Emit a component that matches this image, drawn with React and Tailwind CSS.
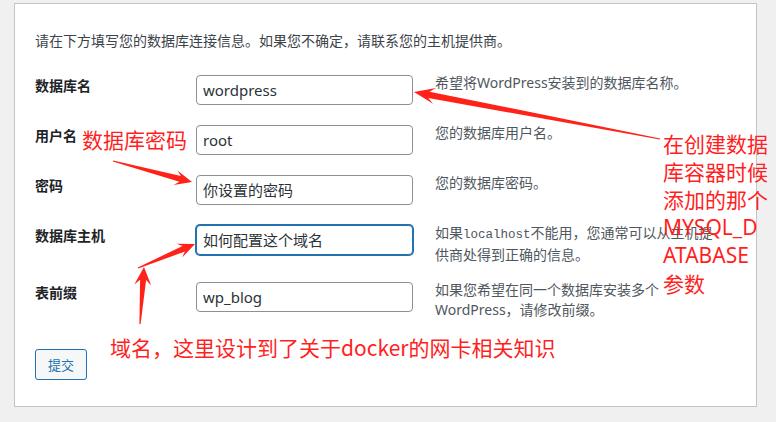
const SANS = "font-['Noto_Sans','Noto_Sans_CJK_SC',sans-serif]";
const CJK = "font-['Noto_Sans_CJK_SC','Noto_Sans',sans-serif]";

// tapered red arrow like a screenshot annotation tool draws
function arrowPoints(x0, y0, x1, y1, head, wing, neck, tail) {
  const len = Math.hypot(x1 - x0, y1 - y0);
  const ux = (x1 - x0) / len;
  const uy = (y1 - y0) / len;
  const nx = -uy;
  const ny = ux;
  const bx = x1 - ux * head;
  const by = y1 - uy * head;
  const kx = x1 - ux * head * 0.72;
  const ky = y1 - uy * head * 0.72;
  const pts = [
    [x0 + nx * tail, y0 + ny * tail],
    [kx + nx * neck, ky + ny * neck],
    [bx + nx * wing, by + ny * wing],
    [x1, y1],
    [bx - nx * wing, by - ny * wing],
    [kx - nx * neck, ky - ny * neck],
    [x0 - nx * tail, y0 - ny * tail],
  ];
  return pts.map((p) => p[0].toFixed(1) + "," + p[1].toFixed(1)).join(" ");
}

const arrows = [
  [660, 139, 414, 92, 21, 8, 3.2, 0.6],
  [113, 161, 192, 182, 17, 7.5, 3, 0.6],
  [138, 268, 195, 244, 17, 7.5, 3, 0.6],
  [140, 324, 144, 267, 18, 8.5, 3, 0.6],
];

const rows = [
  { label: "数据库名", value: "wordpress", desc: ["希望将WordPress安装到的数据库名称。"], h: "h-[50px]" },
  { label: "用户名", value: "root", desc: ["您的数据库用户名。"], h: "h-[50px]" },
  { label: "密码", value: "你设置的密码", desc: ["您的数据库密码。"], h: "h-[50px]" },
  { label: "数据库主机", value: "如何配置这个域名", host: true, focus: true, h: "h-[57px]" },
  { label: "表前缀", value: "wp_blog", desc: ["如果您希望在同一个数据库安装多个", "WordPress，请修改前缀。"], h: "h-[67px]" },
];

function Row({ row }) {
  return (
    <div className={`flex items-start ${row.h}`}>
      <div className={`w-[161px] text-[14px] font-bold leading-[20px] text-[#1d2327] ${CJK}`}>{row.label}</div>
      <div
        className={`flex h-[30px] w-[217px] items-center rounded-[4px] border bg-white pl-[6px] text-[15px] text-[#2c3338] ${SANS} ${
          row.focus ? "border-[#2271b1] shadow-[0_0_0_1px_#2271b1]" : "border-[#8c8f94]"
        }`}
      >
        {row.value}
      </div>
      <div className={`-mt-[2px] ml-[22px] whitespace-nowrap text-[14px] leading-[20px] text-[#50575e] ${SANS}`}>
        {row.host ? (
          <>
            如果<span className="font-['Liberation_Mono',monospace] text-[12.5px]">localhost</span>
            不能用，您通常可以从主机提
            <br />
            供商处得到正确的信息。
          </>
        ) : (
          row.desc.map((line) => <div key={line}>{line}</div>)
        )}
      </div>
    </div>
  );
}

export default function App() {
  return (
    <div className="relative h-[422px] w-[776px] overflow-hidden bg-[#f0f0f1] pt-[3px]">
      <div className="ml-[14px] h-[404px] w-[743px] border border-[#c3c4c7] bg-white pl-[20px] pt-[26px]">
        <p className={`text-[14px] leading-[20px] text-[#3c434a] ${CJK}`}>
          请在下方填写您的数据库连接信息。如果您不确定，请联系您的主机提供商。
        </p>
        <div className="mt-[25px]">
          {rows.map((row) => (
            <Row key={row.label} row={row} />
          ))}
        </div>
        <button
          className={`h-[31px] w-[52px] rounded-[3px] border border-[#2271b1] bg-[#f6f7f7] text-[13px] text-[#2271b1] ${CJK}`}
        >
          提交
        </button>
      </div>

      <svg className="absolute left-0 top-0" width="776" height="422">
        {arrows.map((a, i) => (
          <polygon key={i} points={arrowPoints(...a)} fill="#ff2219" />
        ))}
      </svg>

      <div className={`absolute left-[82px] top-[125px] text-[21px] leading-[28px] text-[#ff1f1f] ${CJK}`}>
        数据库密码
      </div>
      <div className={`absolute left-[663px] top-[129px] flex flex-col text-[21px] leading-[28px] text-[#ff1f1f] ${CJK}`}>
        <span>在创建数据</span>
        <span>库容器时候</span>
        <span>添加的那个</span>
        <span className={SANS}>MYSQL_D</span>
        <span className={SANS}>ATABASE</span>
        <span>参数</span>
      </div>
      <div className={`absolute left-[110px] top-[333px] text-[21px] leading-[28px] text-[#ff1f1f] ${CJK}`}>
        域名，这里设计到了关于docker的网卡相关知识
      </div>
    </div>
  );
}
